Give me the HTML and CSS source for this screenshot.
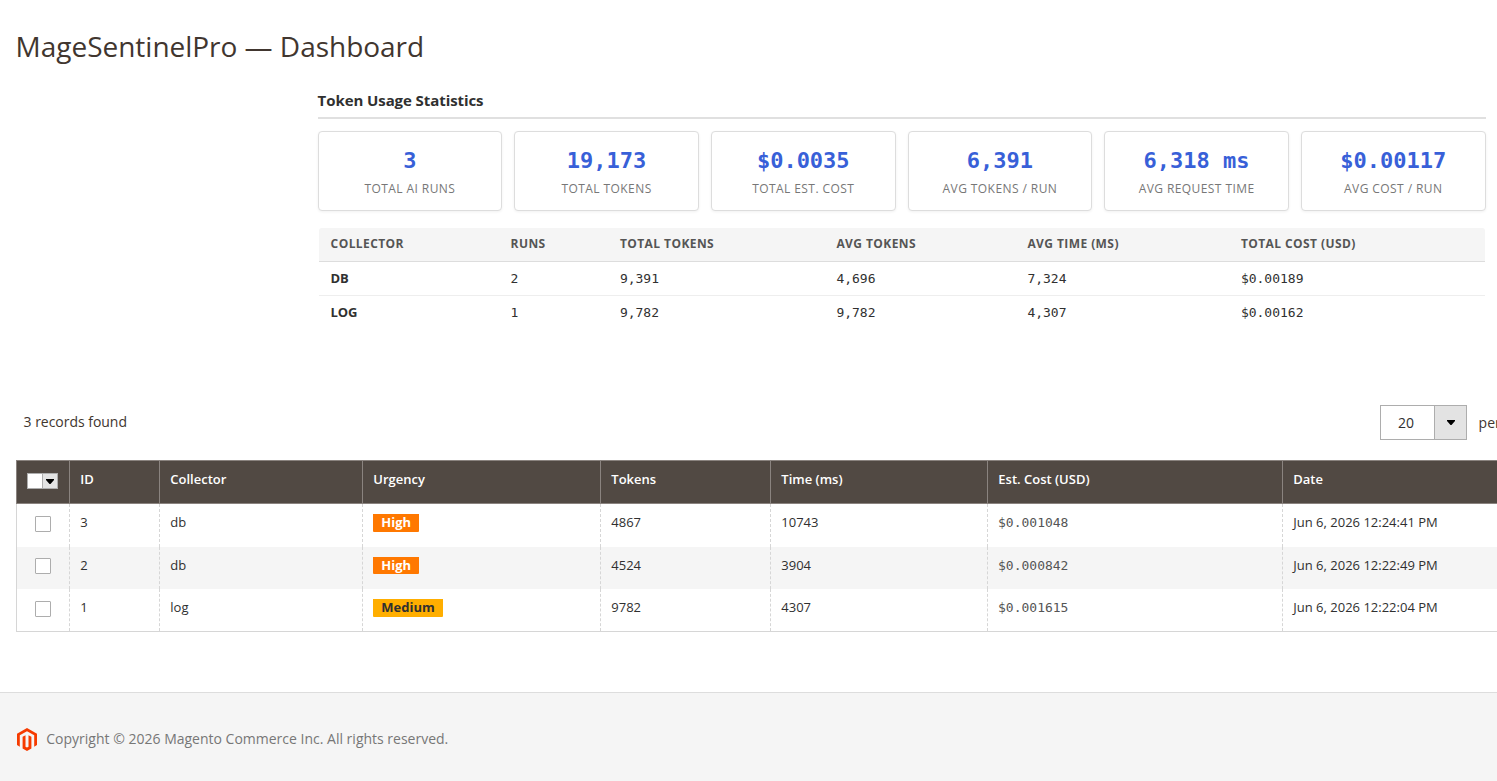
FILE: index.html
```html
<!DOCTYPE html>
<html lang="en">
<head>
<meta charset="utf-8">
<title>MageSentinelPro — Dashboard</title>
<link rel="stylesheet" href="styles.css">
</head>
<body>
<header class="page-header"><h1 class="page-title">MageSentinelPro — Dashboard</h1></header>
<main class="page-content">
  <section class="stats">
    <h2 class="stats-title">Token Usage Statistics</h2>
    <div class="cards">
      <div class="card"><div class="card-value">3</div><div class="card-label">TOTAL AI RUNS</div></div>
      <div class="card"><div class="card-value">19,173</div><div class="card-label">TOTAL TOKENS</div></div>
      <div class="card"><div class="card-value">$0.0035</div><div class="card-label">TOTAL EST. COST</div></div>
      <div class="card"><div class="card-value">6,391</div><div class="card-label">AVG TOKENS / RUN</div></div>
      <div class="card"><div class="card-value">6,318 ms</div><div class="card-label">AVG REQUEST TIME</div></div>
      <div class="card"><div class="card-value">$0.00117</div><div class="card-label">AVG COST / RUN</div></div>
    </div>
    <div class="summary">
      <div class="summary-row summary-head"><span>COLLECTOR</span><span>RUNS</span><span>TOTAL TOKENS</span><span>AVG TOKENS</span><span>AVG TIME (MS)</span><span>TOTAL COST (USD)</span></div>
      <div class="summary-row"><strong class="summary-name">DB</strong><span>2</span><span>9,391</span><span>4,696</span><span>7,324</span><span>$0.00189</span></div>
      <div class="summary-row"><strong class="summary-name">LOG</strong><span>1</span><span>9,782</span><span>9,782</span><span>4,307</span><span>$0.00162</span></div>
    </div>
  </section>
  <div class="toolbar">
    <div class="records">3 records found</div>
    <div class="pager">
      <div class="limit"><span class="limit-value">20</span><span class="limit-button"><svg width="8" height="5" viewBox="0 0 8 5"><path d="M0 0h8v1L4.5 5h-1L0 1z"/></svg></span></div>
      <span class="per-page">per page</span>
    </div>
  </div>
  <div class="grid">
    <div class="grid-row grid-head">
      <div class="check-cell"><span class="multicheck"><span class="multicheck-box"></span><span class="multicheck-button"><svg width="8" height="5" viewBox="0 0 8 5"><path d="M0 0h8v1L4.5 5h-1L0 1z"/></svg></span></span></div>
      <div>ID</div><div>Collector</div><div>Urgency</div><div>Tokens</div><div>Time (ms)</div><div>Est. Cost (USD)</div><div>Date</div>
    </div>
    <div class="grid-row first"><div class="check-cell"><span class="checkbox"></span></div><div>3</div><div>db</div><div><span class="badge high">High</span></div><div>4867</div><div>10743</div><div class="cost">$0.001048</div><div>Jun 6, 2026 12:24:41 PM</div></div>
    <div class="grid-row striped"><div class="check-cell"><span class="checkbox"></span></div><div>2</div><div>db</div><div><span class="badge high short">High</span></div><div>4524</div><div>3904</div><div class="cost">$0.000842</div><div>Jun 6, 2026 12:22:49 PM</div></div>
    <div class="grid-row last"><div class="check-cell"><span class="checkbox"></span></div><div>1</div><div>log</div><div><span class="badge medium">Medium</span></div><div>9782</div><div>4307</div><div class="cost">$0.001615</div><div>Jun 6, 2026 12:22:04 PM</div></div>
  </div>
</main>
<footer class="footer">
  <svg class="logo" width="20" height="23" viewBox="0 0 20 23" fill="#f63b00"><path d="M10 0 20 5.8v11.3l-2.8 1.6V7.3L10 3.2 2.8 7.3v11.4L0 17.1V5.8z"/><path d="M5.6 8.8 8.5 7.2v11.5l1.5.9 1.5-.9V7.2l2.9 1.6v11.6L10 23l-4.4-2.6z"/></svg>
  <span>Copyright © 2026 Magento Commerce Inc. All rights reserved.</span>
</footer>
</body>
</html>
```
FILE: styles.css
```css
* { box-sizing: border-box; }
body {
  margin: 0;
  height: 781px;
  display: flex;
  flex-direction: column;
  overflow: hidden;
  background: #fff;
  color: #303030;
  font: 13px/18px "Open Sans", "Noto Sans", sans-serif;
}
.page-header { padding: 27px 15.6px 0; height: 91px; }
.page-title { margin: 0; font-size: 28px; line-height: 38px; font-weight: 400; letter-spacing: -.02px; color: #41362f; }
.page-content { height: 601px; overflow: hidden; }
.stats { margin-left: 317.6px; width: 1168px; height: 314px; }
.stats-title { margin: 0 0 12px; height: 28px; font-size: 15px; line-height: 18px; font-weight: 700; letter-spacing: -.08px; border-bottom: 2px solid #e0e0e0; }
.cards { display: grid; grid-template-columns: repeat(6, 1fr); gap: 12px; }
.card { height: 80px; padding-top: 16px; background: #fff; border: 1px solid #ddd; border-radius: 4px; box-shadow: 0 1px 3px rgba(0, 0, 0, .06); text-align: center; }
.card-value { font: 700 22px/26px "DejaVu Sans Mono", monospace; color: #3860d8; }
.card-label { margin-top: 6px; font-size: 12px; line-height: 18px; letter-spacing: .42px; color: #777; }
.summary { margin: 17px 1px 0; }
.summary-row { display: grid; grid-template-columns: 180px 109.3px 216.5px 191px 213.5px 1fr; height: 34px; padding-left: 12px; line-height: 34px; font-family: "DejaVu Sans Mono", monospace; border-bottom: 1px solid #eee; }
.summary-row:last-child { border-bottom: 0; }
.summary-head { background: #f5f5f5; border-bottom-color: #ddd; border-radius: 3px 3px 0 0; font: 700 12px/32px "Open Sans", sans-serif; letter-spacing: .42px; color: #555; }
.summary-name { font-family: "Open Sans", sans-serif; font-weight: 700; line-height: 32px; letter-spacing: -.1px; }
.toolbar { display: flex; justify-content: space-between; height: 55px; padding-left: 23.6px; font-size: 14px; color: #41362f; }
.records { line-height: 34px; letter-spacing: -.03px; }
.pager { display: flex; flex: none; width: 117px; white-space: nowrap; }
.limit { display: flex; flex: none; width: 87px; height: 35px; border: 1px solid #adadad; }
.limit-value { flex: 1; padding-left: 17px; line-height: 33px; color: #303030; }
.limit-button { display: flex; align-items: center; justify-content: center; width: 32px; background: #e3e3e3; border-left: 1px solid #adadad; }
.limit-button svg { margin-left: 1px; }
.per-page { margin-left: 11.6px; line-height: 36px; }
.grid { margin-left: 16px; width: 1600px; }
.grid-row { display: grid; grid-template-columns: 53px 90px 203px 238px 170px 217px 295px 1fr; height: 42px; }
.grid-row > div { padding: 9px 10px 0 10.3px; border-left: 1px dashed #d6d6d6; }
.grid-row > .check-cell { padding: 0; border-left: 1px solid #d6d6d6; display: flex; justify-content: center; align-items: center; }
.grid-head { height: 44px; background: #514943; border-top: 1px solid #8a837f; border-bottom: 1px solid #8a837f; color: #fff; font-weight: 600; }
.grid-head > div, .grid-head > .check-cell { border-left: 1px solid #8a837f; }
.grid-row.grid-head > .check-cell { padding: 0 1px 2px 0; }
.first { height: 43px; }
.first > .check-cell.check-cell { padding-bottom: 3px; }
.grid-row.striped { background: #f5f5f5; }
.first .checkbox, .last .checkbox { margin-bottom: 0; }
.checkbox { width: 16px; height: 16px; background: #fff; border: 1px solid #adadad; border-radius: 1px; }
.grid-row.first > .check-cell { padding-bottom: 3px; }
.grid-row.striped > .check-cell { padding-bottom: 4px; }
.last { height: 43px; border-bottom: 1px solid #d6d6d6; }
.grid-row.last > .check-cell { padding-bottom: 3px; }
.multicheck { display: flex; width: 31px; height: 16px; background: #fff; border: 1px solid #adadad; }
.multicheck-box { flex: 1; }
.multicheck-button { display: flex; align-items: center; justify-content: center; width: 15px; background: #e3e3e3; border-left: 1px solid #adadad; }
.badge { display: block; width: fit-content; margin: 1px 0 0 -.3px; height: 18px; padding: 0 8.3px; line-height: 17px; font-weight: 700; border-radius: 0 0 1px 1px; }
.high { background: #ff7800; color: #fff; }
.short { height: 17px; }
.medium { background: #ffae00; color: #303030; }
.grid-row > .cost { padding-top: 10px; padding-left: 10px; font-family: "DejaVu Sans Mono", monospace; color: #555; }
.footer { flex: 1; display: flex; align-items: center; gap: 9.3px; padding: 4px 17px 0; background: #f5f5f5; border-top: 1px solid #ddd; font-size: 14px; color: #777; }
```
